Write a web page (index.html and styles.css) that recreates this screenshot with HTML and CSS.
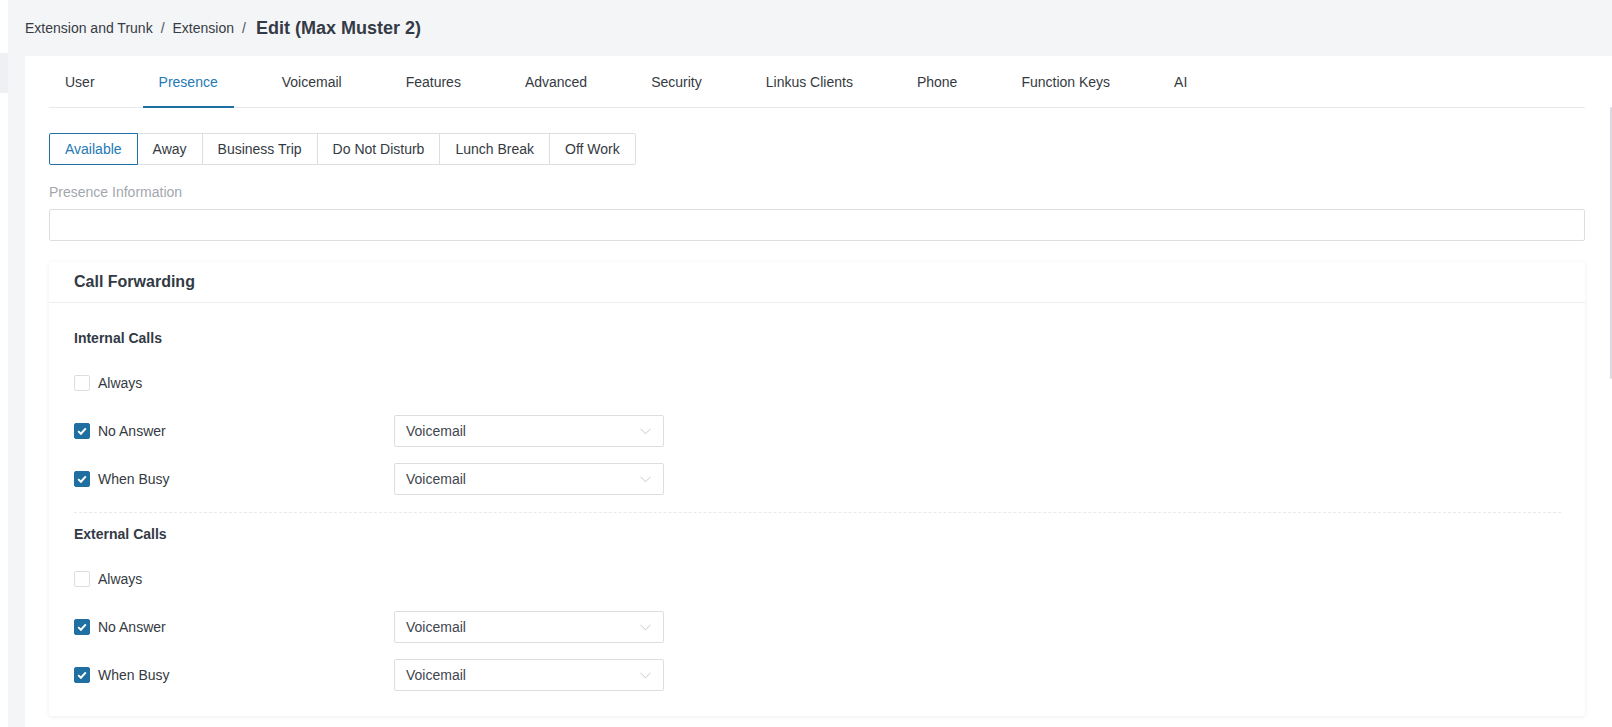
FILE: index.html
```html
<!DOCTYPE html>
<html lang="en">
<head>
    <meta charset="UTF-8">
    <meta name="viewport" content="width=device-width, initial-scale=1.0">
    <title>Edit Extension</title>
    <link rel="stylesheet" href="styles.css">
</head>
<body>
    <div class="layout">
        <aside class="sidebar">
            <div class="sidebar-item"></div>
        </aside>

        <main class="main">
            <div class="breadcrumb">
                <span class="crumb">Extension and Trunk</span>
                <span class="sep">/</span>
                <span class="crumb">Extension</span>
                <span class="sep">/</span>
                <span class="crumb current">Edit (Max Muster 2)</span>
            </div>

            <div class="page">
                <nav class="tabs">
                    <span class="tab">User</span>
                    <span class="tab active">Presence</span>
                    <span class="tab">Voicemail</span>
                    <span class="tab">Features</span>
                    <span class="tab">Advanced</span>
                    <span class="tab">Security</span>
                    <span class="tab">Linkus Clients</span>
                    <span class="tab">Phone</span>
                    <span class="tab">Function Keys</span>
                    <span class="tab">AI</span>
                </nav>

                <div class="status-group">
                    <span class="status-btn active">Available</span>
                    <span class="status-btn">Away</span>
                    <span class="status-btn">Business Trip</span>
                    <span class="status-btn">Do Not Disturb</span>
                    <span class="status-btn">Lunch Break</span>
                    <span class="status-btn">Off Work</span>
                </div>

                <label class="field-label" for="presenceInfo">Presence Information</label>
                <input class="text-input" type="text" id="presenceInfo">

                <section class="card">
                    <div class="card-header">Call Forwarding</div>
                    <div class="card-body">
                        <div class="group-title">Internal Calls</div>
                        <div class="fw-row">
                            <label class="check"><span class="box"></span>Always</label>
                        </div>
                        <div class="fw-row">
                            <label class="check"><span class="box checked"><svg width="16" height="16" viewBox="0 0 16 16"><path d="M4.2 8.1 L6.9 10.7 L11.8 5.4" fill="none" stroke="#fff" stroke-width="2"/></svg></span>No Answer</label>
                            <div class="select">Voicemail<svg class="chevron" width="11" height="7" viewBox="0 0 11 7"><path d="M0.5 0.8 L5.5 5.8 L10.5 0.8" fill="none" stroke="#c4c8ce" stroke-width="1"/></svg></div>
                        </div>
                        <div class="fw-row">
                            <label class="check"><span class="box checked"><svg width="16" height="16" viewBox="0 0 16 16"><path d="M4.2 8.1 L6.9 10.7 L11.8 5.4" fill="none" stroke="#fff" stroke-width="2"/></svg></span>When Busy</label>
                            <div class="select">Voicemail<svg class="chevron" width="11" height="7" viewBox="0 0 11 7"><path d="M0.5 0.8 L5.5 5.8 L10.5 0.8" fill="none" stroke="#c4c8ce" stroke-width="1"/></svg></div>
                        </div>

                        <div class="divider"></div>

                        <div class="group-title">External Calls</div>
                        <div class="fw-row">
                            <label class="check"><span class="box"></span>Always</label>
                        </div>
                        <div class="fw-row">
                            <label class="check"><span class="box checked"><svg width="16" height="16" viewBox="0 0 16 16"><path d="M4.2 8.1 L6.9 10.7 L11.8 5.4" fill="none" stroke="#fff" stroke-width="2"/></svg></span>No Answer</label>
                            <div class="select">Voicemail<svg class="chevron" width="11" height="7" viewBox="0 0 11 7"><path d="M0.5 0.8 L5.5 5.8 L10.5 0.8" fill="none" stroke="#c4c8ce" stroke-width="1"/></svg></div>
                        </div>
                        <div class="fw-row">
                            <label class="check"><span class="box checked"><svg width="16" height="16" viewBox="0 0 16 16"><path d="M4.2 8.1 L6.9 10.7 L11.8 5.4" fill="none" stroke="#fff" stroke-width="2"/></svg></span>When Busy</label>
                            <div class="select">Voicemail<svg class="chevron" width="11" height="7" viewBox="0 0 11 7"><path d="M0.5 0.8 L5.5 5.8 L10.5 0.8" fill="none" stroke="#c4c8ce" stroke-width="1"/></svg></div>
                        </div>
                    </div>
                </section>
            </div>

            <div class="scroll-thumb"></div>
        </main>
    </div>
</body>
</html>
```

FILE: styles.css
```css
* {
    box-sizing: border-box;
    margin: 0;
    padding: 0;
}

body {
    font-family: 'Liberation Sans', Arial, sans-serif;
    font-size: 14px;
    color: #333;
    background-color: #f4f5f7;
    height: 727px;
    overflow: hidden;
}

.layout {
    display: flex;
    height: 100%;
}

.sidebar {
    width: 8px;
    flex-shrink: 0;
    background-color: #fff;
    padding-top: 53px;
}

.sidebar-item {
    height: 40px;
    background-color: #eef0f3;
}

.main {
    flex: 1;
    position: relative;
    display: flex;
    flex-direction: column;
    min-width: 0;
}

.breadcrumb {
    height: 56px;
    display: flex;
    align-items: center;
    padding-left: 17px;
    color: #363b44;
}

.sep {
    margin: 0 8px;
    color: #4a4f57;
}

.crumb.current {
    font-size: 18px;
    font-weight: bold;
    color: #343b46;
    margin-left: 2px;
}

.page {
    flex: 1;
    margin-left: 17px;
    background-color: #fff;
    padding: 0 27px 0 24px;
}

/* tabs */
.tabs {
    display: flex;
    border-bottom: 1px solid #e8e9eb;
}

.tab {
    padding: 3px 16px 0;
    line-height: 47px;
    margin-right: 32px;
    margin-bottom: -1px;
    border-bottom: 2px solid transparent;
    color: #353a42;
}

.tab.active {
    color: #2479b5;
    border-bottom-color: #1f6fa3;
}

/* presence buttons */
.status-group {
    display: flex;
    margin-top: 25px;
}

.status-btn {
    height: 32px;
    line-height: 30px;
    padding: 0 15px;
    border: 1px solid #dcdee2;
    margin-left: -1px;
    color: #353a42;
    background-color: #fff;
}

.status-btn:first-child {
    margin-left: 0;
    border-radius: 2px 0 0 2px;
}

.status-btn:last-child {
    border-radius: 0 2px 2px 0;
}

.status-btn.active {
    position: relative;
    z-index: 1;
    border-color: #1f6fa3;
    color: #2479b5;
}

.field-label {
    display: block;
    margin-top: 16px;
    line-height: 22px;
    color: #a3a7ad;
}

.text-input {
    display: block;
    width: 100%;
    height: 32px;
    margin-top: 6px;
    border: 1px solid #dcdee2;
    border-radius: 2px;
    font-family: inherit;
    font-size: 14px;
    padding: 0 11px;
}

/* call forwarding card */
.card {
    margin-top: 21px;
    background-color: #fff;
    border-radius: 2px;
    box-shadow: 0 1px 5px rgba(0, 0, 0, 0.07);
}

.card-header {
    line-height: 40px;
    padding: 0 25px;
    border-bottom: 1px solid #eceef0;
    font-size: 16px;
    font-weight: bold;
    color: #323a45;
}

.card-body {
    padding: 24px 24px 25px 25px;
}

.group-title {
    line-height: 22px;
    font-weight: bold;
    color: #323a45;
    margin-bottom: 18px;
}

.fw-row {
    display: flex;
    align-items: center;
    height: 32px;
    margin-bottom: 16px;
}

.fw-row:last-child {
    margin-bottom: 0;
}

.check {
    width: 320px;
    display: flex;
    align-items: center;
    color: #353a42;
}

.box {
    width: 16px;
    height: 16px;
    margin-right: 8px;
    border: 1px solid #dcdee2;
    border-radius: 2px;
    background-color: #fff;
    display: flex;
}

.box.checked {
    border-color: #1f6fa3;
    background-color: #1f6fa3;
}

.box svg {
    margin: -1px;
}

.select {
    width: 270px;
    height: 32px;
    border: 1px solid #dcdee2;
    border-radius: 2px;
    padding: 0 12px 0 11px;
    display: flex;
    align-items: center;
    justify-content: space-between;
    color: #3f4650;
}

.divider {
    border-top: 1px dashed #e8e9eb;
    margin: 17px 0 10px;
}

.scroll-thumb {
    position: absolute;
    right: 0;
    top: 107px;
    width: 2px;
    height: 272px;
    border-radius: 1px;
    background-color: #dadbe0;
}
```
